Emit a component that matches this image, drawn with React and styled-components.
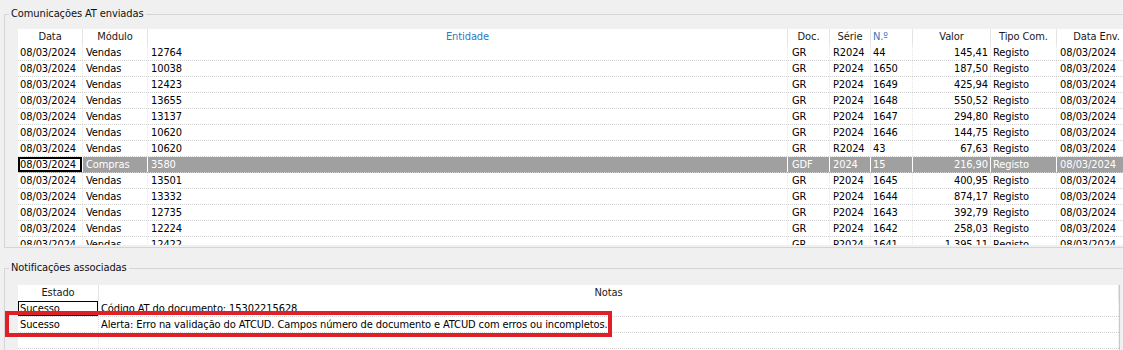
import React from "react";
import styled, { createGlobalStyle } from "styled-components";

const GlobalStyle = createGlobalStyle`
  html, body {
    margin: 0;
    padding: 0;
    background: #f0f0f0;
    overflow: hidden;
  }
  body {
    font-family: "DejaVu Sans Condensed", "DejaVu Sans", "Liberation Sans", sans-serif;
    font-stretch: condensed;
    font-size: 11px;
    letter-spacing: -0.1px;
    color: #000;
  }
`;

const Page = styled.div`
  position: relative;
  width: 1150px;
  padding: 7px 0 0 4px;
  box-sizing: border-box;
`;

const GroupBox = styled.fieldset`
  margin: ${(p) => p.$top || 0}px 0 0 0;
  padding: ${(p) => p.$padTop}px 0 2px 13px;
  border: 1px solid #d5d5d5;
  min-width: 0;
`;

const Legend = styled.legend`
  padding: 0 2px;
  margin-left: -9px;
  line-height: 14px;
  color: #111;
`;

const Grid = styled.div`
  width: ${(p) => p.$w}px;
  height: ${(p) => p.$h}px;
  background: #fff;
  overflow: hidden;
  box-sizing: border-box;
  border-right: ${(p) => (p.$edge ? "1px solid #c9c9c9" : "none")};
`;

const Row = styled.div`
  display: grid;
  grid-template-columns: ${(p) => p.$cols};
  height: 16px;
  box-sizing: border-box;
  line-height: 15px;
  background: ${(p) => (p.$selected ? "#a0a0a0" : "#fff")};
  color: ${(p) => (p.$selected ? "#fff" : "#000")};
  border-bottom: ${(p) => (p.$head ? "none" : "1px dotted #d4d4d4")};
`;

const HeadCell = styled.div`
  padding: 0 2px;
  text-align: ${(p) => p.$align || "center"};
  color: ${(p) => (p.$blue ? "#2f77bf" : "#1a1a1a")};
  border-right: 1px solid #e4e4e4;
  white-space: nowrap;
  overflow: hidden;
  line-height: 16px;
`;

const Cell = styled.div`
  padding: 0 2px 0 ${(p) => p.$padLeft ?? 3}px;
  text-align: ${(p) => p.$align || "left"};
  white-space: nowrap;
  overflow: hidden;
  border-right: ${(p) => (p.$selected ? "1px solid #fff" : "1px dotted #e6e6e6")};
  ${(p) =>
    p.$focus &&
    `
    background: #fff;
    color: #000;
    box-shadow: inset 0 0 0 ${p.$focus}px #000;
  `}
`;

const Highlight = styled.div`
  position: absolute;
  left: 5px;
  top: 311px;
  width: 607px;
  height: 26px;
  border: 4px solid #e01f27;
  box-sizing: border-box;
  pointer-events: none;
`;

const sentCols = "65px 65px 640px 42px 41px 42px 78px 66px 80px";
const notifCols = "81px 1fr";

const sentHead = [
  { label: "Data" },
  { label: "Módulo" },
  { label: "Entidade", blue: true },
  { label: "Doc." },
  { label: "Série" },
  { label: "N.º", blue: true, align: "left" },
  { label: "Valor" },
  { label: "Tipo Com." },
  { label: "Data Env." },
];

const sent = [
  ["Vendas", "12764", "GR", "R2024", "44", "145,41"],
  ["Vendas", "10038", "GR", "P2024", "1650", "187,50"],
  ["Vendas", "12423", "GR", "P2024", "1649", "425,94"],
  ["Vendas", "13655", "GR", "P2024", "1648", "550,52"],
  ["Vendas", "13137", "GR", "P2024", "1647", "294,80"],
  ["Vendas", "10620", "GR", "P2024", "1646", "144,75"],
  ["Vendas", "10620", "GR", "R2024", "43", "67,63"],
  ["Compras", "3580", "GDF", "2024", "15", "216,90"],
  ["Vendas", "13501", "GR", "P2024", "1645", "400,95"],
  ["Vendas", "13332", "GR", "P2024", "1644", "874,17"],
  ["Vendas", "12735", "GR", "P2024", "1643", "392,79"],
  ["Vendas", "12224", "GR", "P2024", "1642", "258,03"],
  ["Vendas", "12422", "GR", "P2024", "1641", "1.395,11"],
];

const notifications = [
  ["Sucesso", "Código AT do documento: 15302215628"],
  [
    "Sucesso",
    "Alerta: Erro na validação do ATCUD. Campos número de documento e ATCUD com erros ou incompletos.",
  ],
  ["", ""],
];

export default function App() {
  const selectedRow = 7;

  return (
    <Page>
      <GlobalStyle />

      <GroupBox $padTop={8}>
        <Legend>Comunicações AT enviadas</Legend>
        <Grid $w={1119} $h={216}>
          <Row $cols={sentCols} $head>
            {sentHead.map((h) => (
              <HeadCell key={h.label} $blue={h.blue} $align={h.align}>
                {h.label}
              </HeadCell>
            ))}
          </Row>
          {sent.map((r, i) => {
            const sel = i === selectedRow;
            return (
              <Row key={i} $cols={sentCols} $selected={sel}>
                <Cell $padLeft={2} $selected={sel} $focus={sel ? 2 : 0}>
                  08/03/2024
                </Cell>
                <Cell $selected={sel}>{r[0]}</Cell>
                <Cell $selected={sel}>{r[1]}</Cell>
                <Cell $selected={sel} $padLeft={4}>{r[2]}</Cell>
                <Cell $selected={sel}>{r[3]}</Cell>
                <Cell $selected={sel} $padLeft={2}>{r[4]}</Cell>
                <Cell $selected={sel} $align="right">{r[5]}</Cell>
                <Cell $selected={sel} $padLeft={2}>Registo</Cell>
                <Cell $selected={sel}>08/03/2024</Cell>
              </Row>
            );
          })}
        </Grid>
      </GroupBox>

      <GroupBox $top={13} $padTop={10}>
        <Legend>Notificações associadas</Legend>
        <Grid $w={1102} $h={68} $edge>
          <Row $cols={notifCols} $head>
            <HeadCell>Estado</HeadCell>
            <HeadCell>Notas</HeadCell>
          </Row>
          {notifications.map((n, i) => (
            <Row key={i} $cols={notifCols}>
              <Cell $padLeft={2} $focus={i === 0 ? 1 : 0}>
                {n[0]}
              </Cell>
              <Cell $padLeft={2}>{n[1]}</Cell>
            </Row>
          ))}
        </Grid>
      </GroupBox>

      <Highlight />
    </Page>
  );
}
